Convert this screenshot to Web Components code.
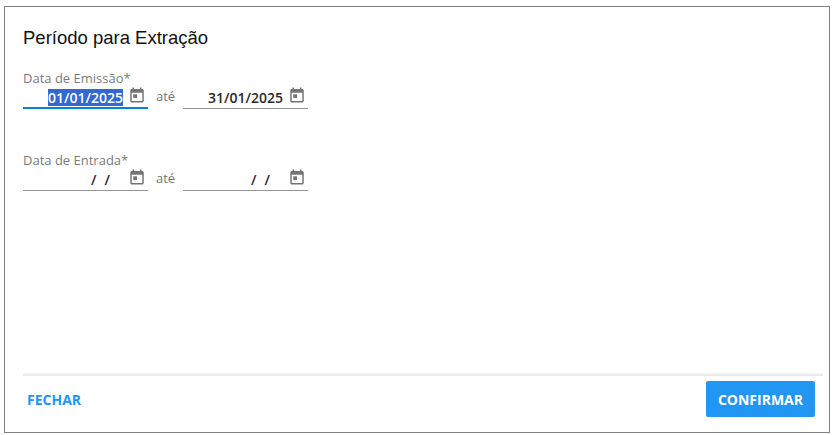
<!DOCTYPE html>
<html lang="pt-BR">
<head>
<meta charset="utf-8">
<title>Período para Extração</title>
<style>
    html, body { margin: 0; height: 100%; background: #fff; }
    body { padding: 6px 3px 2px 4px; box-sizing: border-box; font-family: "Open Sans", sans-serif; }
</style>
</head>
<body>
<extraction-dialog>
    <span slot="title">Período para Extração</span>
    <date-range label="Data de Emissão*">
        <date-field slot="from" value="01/01/2025" focused></date-field>
        <date-field slot="to" value="31/01/2025"></date-field>
    </date-range>
    <date-range label="Data de Entrada*">
        <date-field slot="from" value="/ /" empty></date-field>
        <date-field slot="to" value="/ /" empty></date-field>
    </date-range>
    <dialog-button slot="left">FECHAR</dialog-button>
    <dialog-button slot="right" primary>CONFIRMAR</dialog-button>
</extraction-dialog>

<script>
/* || Dialog frame */
const ExtractionDialogTemplate = document.createElement("template");
ExtractionDialogTemplate.innerHTML = `
    <style>
        :host {
            display: flex;
            flex-direction: column;
            height: 100%;
            box-sizing: border-box;
            border: 1px solid #808080;
            background: #fff;
        }
        #title {
            font: 18.5px/22px "Liberation Sans", sans-serif;
            color: #111;
            padding: 20px 18px 0 18px;
        }
        #content {
            flex-grow: 1;
            display: flex;
            flex-direction: column;
            gap: 43px;
            padding: 21px 18px 0 18px;
        }
        #rule {
            height: 3px;
            margin: 0 6px 0 18px;
            background: linear-gradient(#f7f7f7, #e6e6e6);
        }
        #footer {
            display: flex;
            justify-content: space-between;
            align-items: center;
            margin: 0 14px 0 18px;
            padding: 5px 0 15px 0;
        }
    </style>
    <div id=title><slot name=title></slot></div>
    <div id=content><slot></slot></div>
    <div id=rule></div>
    <div id=footer>
        <slot name=left></slot>
        <slot name=right></slot>
    </div>
`;

class ExtractionDialog extends HTMLElement {
    constructor() {
        super();
        this.attachShadow( {mode: 'open'} );
        this.shadowRoot.appendChild(ExtractionDialogTemplate.content.cloneNode(true));
    }
}

customElements.define("extraction-dialog", ExtractionDialog);


/* || Label with two dates */
const DateRangeTemplate = document.createElement("template");
DateRangeTemplate.innerHTML = `
    <style>
        :host {
            display: block;
            font-family: "Open Sans", sans-serif;
        }
        #label {
            font-size: 13px;
            line-height: 16px;
            color: #7b7b7b;
            height: 14px;
        }
        #row {
            display: flex;
            align-items: flex-start;
        }
        #sep {
            width: 35px;
            padding-left: 8px;
            box-sizing: border-box;
            font-size: 13px;
            line-height: 18px;
            padding-top: 3px;
            color: #757575;
        }
    </style>
    <div id=label></div>
    <div id=row>
        <slot name=from></slot>
        <span id=sep>até</span>
        <slot name=to></slot>
    </div>
`;

class DateRange extends HTMLElement {
    constructor() {
        super();
        this.attachShadow( {mode: 'open'} );
        this.shadowRoot.appendChild(DateRangeTemplate.content.cloneNode(true));
        this.shadowRoot.querySelector("#label").textContent = this.getAttribute("label");
    }
}

customElements.define("date-range", DateRange);


/* || Single date input */
const DateFieldTemplate = document.createElement("template");
DateFieldTemplate.innerHTML = `
    <style>
        :host {
            display: flex;
            align-items: flex-start;
            justify-content: flex-end;
            width: 125px;
            height: 25px;
            box-sizing: border-box;
            border-bottom: 1px solid #949494;
            font-family: "Open Sans", sans-serif;
        }
        :host([focused]) {
            border-bottom: 2px solid #0a84d0;
        }
        #value {
            font-size: 14px;
            font-weight: 600;
            line-height: 17px;
            margin-top: 5px;
            color: #2a2a2a;
            white-space: pre;
            word-spacing: 4.5px;
        }
        :host([focused]) #value {
            background: #3367d1;
            color: #fff;
        }
        :host([empty]) #value {
            padding-right: 13px;
        }
        svg {
            display: block;
            width: 18px;
            height: 18px;
            margin: 2px 2px 0 5px;
            fill: #757575;
        }
    </style>
    <span id=value></span>
    <svg viewBox="0 0 24 24" aria-hidden="true">
        <path d="M19 4h-1V2h-2v2H8V2H6v2H5c-1.1 0-2 .9-2 2v14c0 1.1.9 2 2 2h14c1.1 0 2-.9 2-2V6c0-1.1-.9-2-2-2zm0 16H5V9h14v11zM7 11h5v5H7z"/>
    </svg>
`;

class DateField extends HTMLElement {
    constructor() {
        super();
        this.attachShadow( {mode: 'open'} );
        this.shadowRoot.appendChild(DateFieldTemplate.content.cloneNode(true));
        this.shadowRoot.querySelector("#value").textContent = this.getAttribute("value");
    }
}

customElements.define("date-field", DateField);


/* || Footer buttons */
const DialogButtonTemplate = document.createElement("template");
DialogButtonTemplate.innerHTML = `
    <style>
        :host {
            display: block;
            box-sizing: border-box;
            height: 36px;
            padding: 0 4px;
            border-radius: 2px;
            font: 700 14px/38px "Open Sans", sans-serif;
            color: #2196f3;
        }
        :host([primary]) {
            padding: 0 12px;
            background: #2196f3;
            color: #fff;
        }
    </style>
    <slot></slot>
`;

class DialogButton extends HTMLElement {
    constructor() {
        super();
        this.attachShadow( {mode: 'open'} );
        this.shadowRoot.appendChild(DialogButtonTemplate.content.cloneNode(true));
    }
}

customElements.define("dialog-button", DialogButton);
</script>
</body>
</html>
